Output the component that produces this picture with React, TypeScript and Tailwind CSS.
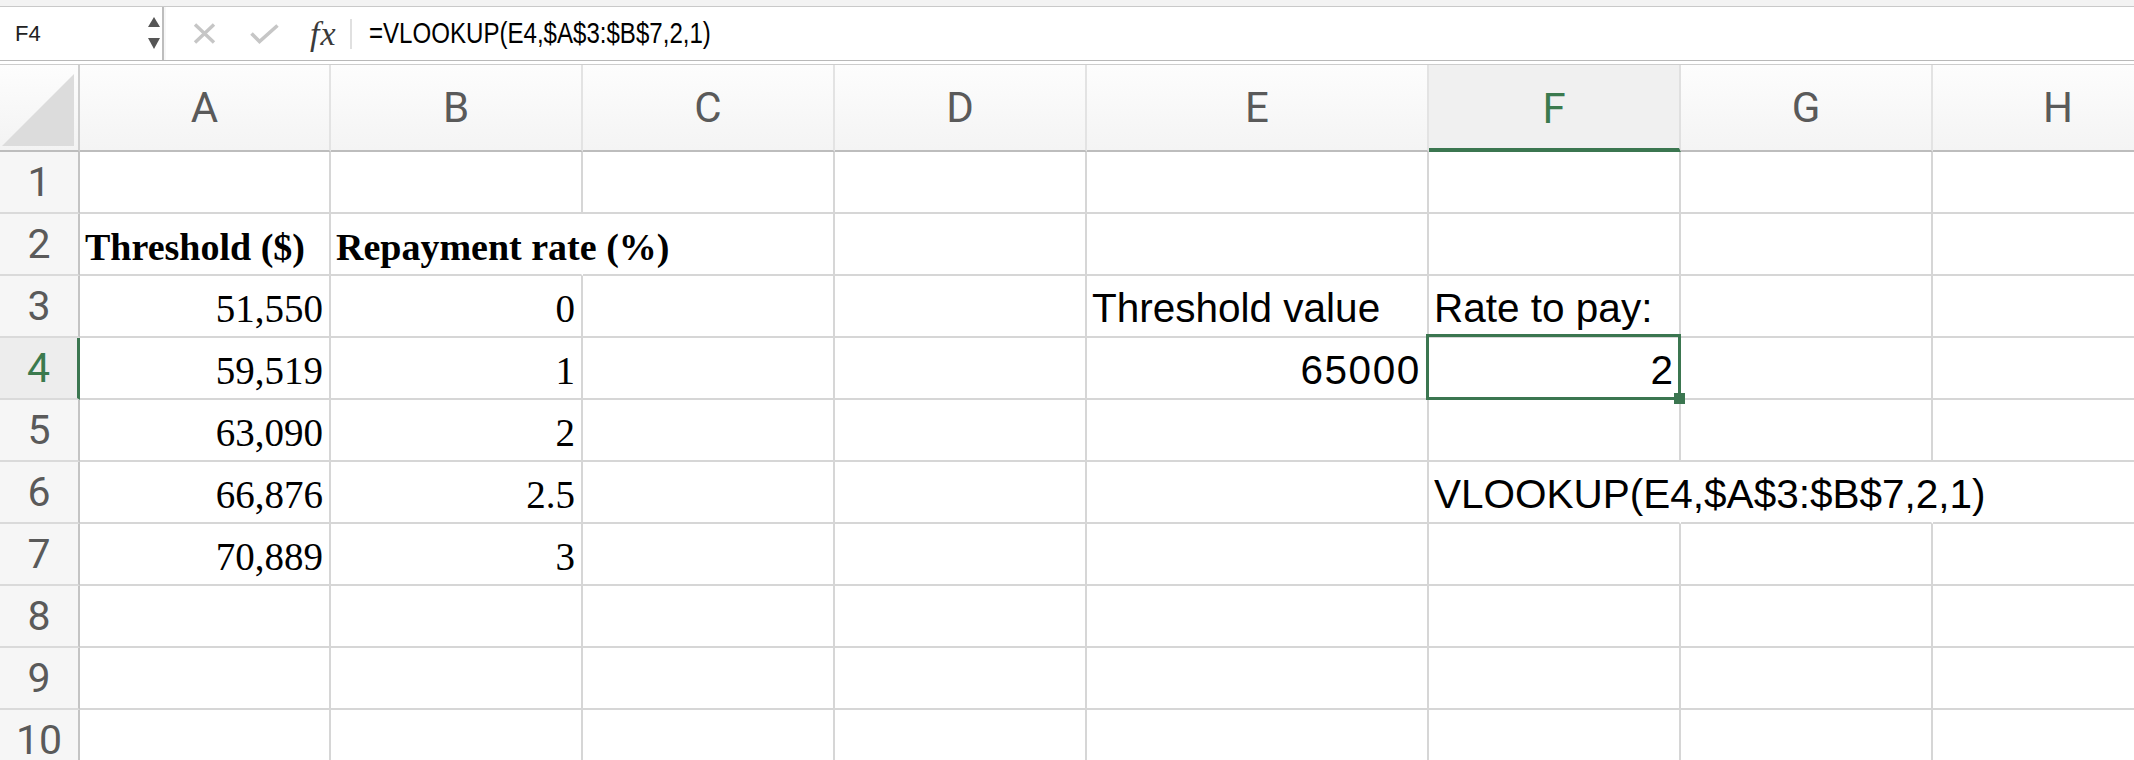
import React from "react";

type Kind = "bold" | "serif" | "sans";
type Cell = { t: string; k: Kind; a: "l" | "r"; track?: boolean };

const COLS: { k: string; w: string }[] = [
  { k: "A", w: "w-[251px]" },
  { k: "B", w: "w-[252px]" },
  { k: "C", w: "w-[252px]" },
  { k: "D", w: "w-[252px]" },
  { k: "E", w: "w-[342px]" },
  { k: "F", w: "w-[252px]" },
  { k: "G", w: "w-[252px]" },
  { k: "H", w: "w-[252px]" },
];

const CELLS: Record<string, Cell> = {
  A2: { t: "Threshold ($)", k: "bold", a: "l" },
  B2: { t: "Repayment rate (%)", k: "bold", a: "l" },
  A3: { t: "51,550", k: "serif", a: "r" },
  A4: { t: "59,519", k: "serif", a: "r" },
  A5: { t: "63,090", k: "serif", a: "r" },
  A6: { t: "66,876", k: "serif", a: "r" },
  A7: { t: "70,889", k: "serif", a: "r" },
  B3: { t: "0", k: "serif", a: "r" },
  B4: { t: "1", k: "serif", a: "r" },
  B5: { t: "2", k: "serif", a: "r" },
  B6: { t: "2.5", k: "serif", a: "r" },
  B7: { t: "3", k: "serif", a: "r" },
  E3: { t: "Threshold value", k: "sans", a: "l" },
  F3: { t: "Rate to pay:", k: "sans", a: "l" },
  E4: { t: "65000", k: "sans", a: "r", track: true },
  F4: { t: "2", k: "sans", a: "r" },
  F6: { t: "VLOOKUP(E4,$A$3:$B$7,2,1)", k: "sans", a: "l" },
};

const HIDE_RIGHT = new Set(["B2", "F6", "G6"]);

const ROWS = [1, 2, 3, 4, 5, 6, 7, 8, 9, 10];

function kindClass(k: Kind) {
  if (k === "bold") return "font-['Liberation_Serif',serif] font-bold text-[38px]";
  if (k === "serif") return "font-['Liberation_Serif',serif] text-[39px]";
  return "font-['Liberation_Sans',Arial,sans-serif] text-[40.5px]";
}

function FormulaBar() {
  return (
    <div className="w-full">
      <div className="h-[6px] bg-[#f3f3f3]" />
      <div className="h-[1px] bg-[#c9c9c9]" />
      <div className="flex h-[53px] bg-[#f7f7f7]">
        <div className="relative flex w-[164px] shrink-0 items-center border-r-2 border-r-[#bdbdbd] bg-white">
          <span className="pl-[15px] font-['Liberation_Sans',Arial,sans-serif] text-[22px] leading-none text-[#222]">
            F4
          </span>
          <svg className="absolute left-[147px] top-[10px]" width="14" height="33" viewBox="0 0 14 33">
            <polygon points="7,0 13,10 1,10" fill="#555" />
            <polygon points="1,21 13,21 7,32" fill="#555" />
          </svg>
        </div>
        <div className="ml-[2px] flex flex-1 items-center bg-white">
          <svg className="ml-[27px] shrink-0" width="23" height="21" viewBox="0 0 23 21">
            <path d="M2 1.5 L21 19.5 M21 1.5 L2 19.5" stroke="#c6c6c6" strokeWidth="3.4" fill="none" />
          </svg>
          <svg className="ml-[34px] shrink-0" width="29" height="20" viewBox="0 0 29 20">
            <path d="M1.5 9.5 L9.5 17.5 L27.5 1.5" stroke="#c6c6c6" strokeWidth="3.6" fill="none" />
          </svg>
          <span className="ml-[31px] font-['Liberation_Serif',serif] text-[34px] italic leading-none tracking-[1px] text-[#3a3a3a]">
            fx
          </span>
          <div className="ml-[13px] h-[30px] w-[2px] bg-[#e0e0e0]" />
          <span className="ml-[17px] inline-block origin-left scale-x-[0.83] whitespace-nowrap font-['Liberation_Sans',Arial,sans-serif] text-[29px] leading-none text-black">
            =VLOOKUP(E4,$A$3:$B$7,2,1)
          </span>
        </div>
      </div>
      <div className="h-[1px] bg-[#b9b9b9]" />
      <div className="h-[3px] bg-white" />
      <div className="h-[1px] bg-[#cdcdcd]" />
    </div>
  );
}

function HeaderRow() {
  return (
    <div className="flex h-[87px]">
      <div className="relative w-[80px] shrink-0 border-r-2 border-b-2 border-r-[#cfcfcf] border-b-[#bdbdbd] bg-linear-to-b from-[#fdfdfd] to-[#f3f3f3]">
        <svg className="absolute left-0 top-0" width="78" height="85" viewBox="0 0 78 85">
          <polygon points="2,81 74,9 74,81" fill="#dcdcdc" />
        </svg>
      </div>
      {COLS.map((c) =>
        c.k === "F" ? (
          <div
            key={c.k}
            className={`${c.w} flex shrink-0 items-center justify-center border-r-2 border-b-4 border-r-[#e0e0e0] border-b-[#3b7650] bg-[#f0f0f0]`}
          >
            <span className="pt-[4px] font-['Roboto',sans-serif] text-[42px] leading-none text-[#3b7a4e]">F</span>
          </div>
        ) : (
          <div
            key={c.k}
            className={`${c.w} flex shrink-0 items-center justify-center border-r-2 border-b-2 border-r-[#e3e3e3] border-b-[#bdbdbd] bg-linear-to-b from-[#fdfdfd] to-[#f4f4f4]`}
          >
            <span className="font-['Roboto',sans-serif] text-[42px] leading-none text-[#5a5a5a]">{c.k}</span>
          </div>
        )
      )}
    </div>
  );
}

function GridRow({ r }: { r: number }) {
  const active = r === 4;
  return (
    <div className="flex h-[62px] shrink-0">
      <div
        className={`flex w-[80px] shrink-0 items-center justify-center border-b-2 border-b-[#dadada] ${
          active ? "border-r-[3px] border-r-[#3b7650] bg-[#ededed]" : "border-r-2 border-r-[#c4c4c4] bg-[#f6f6f6]"
        }`}
      >
        <span
          className={`font-['Roboto',sans-serif] text-[41px] leading-none ${
            active ? "text-[#3b7a4e]" : "text-[#5a5a5a]"
          }`}
        >
          {r}
        </span>
      </div>
      {COLS.map((c) => {
        const id = `${c.k}${r}`;
        const cell = CELLS[id];
        const hide = HIDE_RIGHT.has(id);
        return (
          <div
            key={id}
            className={`${c.w} relative flex shrink-0 items-end whitespace-nowrap border-r-2 border-b-2 border-b-[#d6d6d6] pb-[8px] ${
              hide ? "border-r-transparent" : "border-r-[#d6d6d6]"
            } ${cell && cell.a === "r" ? "justify-end pr-[6px]" : "justify-start pl-[5px]"}`}
          >
            {cell && (
              <span
                className={`${kindClass(cell.k)} leading-none text-black ${cell.track ? "tracking-[1.6px]" : ""}`}
              >
                {cell.t}
              </span>
            )}
            {id === "F4" && (
              <div className="absolute -left-[3px] -top-[4px] -right-[2px] -bottom-[2px] z-10 border-[3px] border-[#3b7650]">
                <div className="absolute -right-[7px] -bottom-[7px] h-[11px] w-[11px] bg-[#3b7650]" />
              </div>
            )}
          </div>
        );
      })}
    </div>
  );
}

export default function App() {
  return (
    <div className="h-[760px] w-[2134px] overflow-hidden bg-white">
      <FormulaBar />
      <div className="w-[2185px]">
        <HeaderRow />
        {ROWS.map((r) => (
          <GridRow key={r} r={r} />
        ))}
      </div>
    </div>
  );
}
